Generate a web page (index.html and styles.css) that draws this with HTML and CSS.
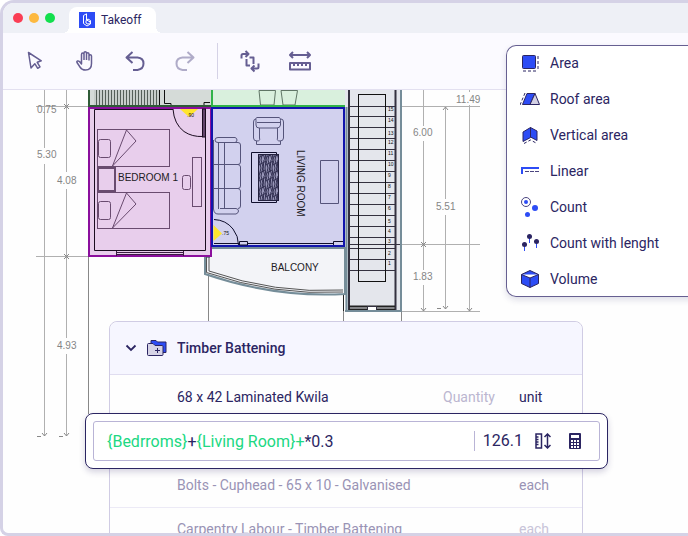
FILE: index.html
```html
<!DOCTYPE html>
<html lang="en">
<head>
    <meta charset="UTF-8">
    <meta name="viewport" content="width=device-width, initial-scale=1.0">
    <title>Takeoff</title>
    <link rel="stylesheet" href="styles.css">
</head>
<body>
    <div class="window">
        <header class="titlebar">
            <span class="dot dot-red"></span>
            <span class="dot dot-yellow"></span>
            <span class="dot dot-green"></span>
            <div class="tab">
                <svg class="logo" width="16" height="16" viewBox="0 0 16 16" fill="none" stroke="#fff">
                    <rect width="16" height="16" fill="#2d4cf5" stroke="none"/>
                    <path d="M4.500 3.500L7.500 1.800V8M4.500 3.500V11.500L8 14L11.500 12V8.500L9 7L7 8.500V11L9 12.200L11.500 10.500M7.500 8L11.500 10"/>
                </svg>
                <span>Takeoff</span>
            </div>
        </header>

        <nav class="toolbar">
            <button class="tool" aria-label="Select">
                <svg width="24" height="24" viewBox="0 0 24 24"><path d="M5.500 3.500L8 19L11.800 14.700L14.700 19.300L17 17.800L14.200 13.300L18.300 11.800Z"/></svg>
            </button>
            <button class="tool" aria-label="Pan">
                <svg width="24" height="24" viewBox="0 0 24 24"><path d="M8.500 13V5.500Q8.500 4 9.700 4T11 5.500V11M11 11V4Q11 2.700 12.200 2.700T13.500 4V11M13.500 5Q13.500 3.700 14.700 3.700T16 5V11.500M16 7Q16 5.800 17.200 5.800T18.500 7V14.500Q18.500 21 12.500 21Q9 21 7.300 18.500L4 13.500Q3.500 12.300 4.500 12T6.500 12.500L8.500 15V12"/></svg>
            </button>
            <button class="tool" aria-label="Undo">
                <svg class="thick" width="24" height="24" viewBox="0 0 24 24"><path d="M9.500 3L3.500 8.500L9.500 14M4 8.500H14.500Q20.500 9 20.500 14.500T14.500 21H10"/></svg>
            </button>
            <button class="tool tool-off" aria-label="Redo" disabled>
                <svg class="thick" width="24" height="24" viewBox="0 0 24 24"><path d="M14.500 3L20.500 8.500L14.500 14M20 8.500H9.500Q3.500 9 3.500 14.500T9.500 21H14"/></svg>
            </button>
            <span class="separator"></span>
            <button class="tool" aria-label="Rotate">
                <svg class="thick" width="24" height="24" viewBox="0 0 24 24"><path d="M3.500 9.500V6.500Q3.500 5 5 5H10M7.500 2L10.500 5L7.500 8M8.500 10V16.500H12M11.500 8.500H15.500V15M20.500 14.500V18Q20.500 19.500 19 19.500H14M16.500 16.500L13.500 19.500L16.500 22.500"/></svg>
            </button>
            <button class="tool" aria-label="Measure">
                <svg class="thick" width="24" height="24" viewBox="0 0 24 24"><path d="M2 6H22M5 3L2 6L5 9M19 3L22 6L19 9M2 14H22V20.500H2ZM6 14V17M10 14V17M14 14V17M18 14V17"/></svg>
            </button>
        </nav>

        <main class="canvas">
            <svg class="plan" width="500" height="360" viewBox="3 90 500 360" fill="none" stroke="#33303f">
                <defs>
                    <pattern id="hatch" width="3" height="16" patternUnits="userSpaceOnUse">
                        <path d="M.5 0V16" stroke="#555f59"/><path d="M2 0V16" stroke="#b9c0bc"/>
                    </pattern>
                    <pattern id="rug" width="7" height="16" patternUnits="userSpaceOnUse">
                        <path d="M0 0L2 8L0 16M2 0L4 7L2 16M5 0L4 9L6 16M7 0L6 8L7 16M0 5L7 1M1 13L6 10" stroke="#302e50"/>
                    </pattern>
                </defs>

                <!-- dimension lines -->
                <g stroke="#b0b0b0">
                    <path d="M44.500 90V436M66.500 90V436M36 106.500H89M36 256.500H89"/>
                    <path d="M402 106.500H480M402 244.500H480M402 311.500H480"/>
                    <path d="M423.500 90V311M445.500 107V309M469.500 90V311"/>
                    <path d="M88.500 257V414M208.500 257V322M343.500 295V322M401.500 311V322" stroke="#888"/>
                    <path d="M64 104L69 109M64 109L69 104M64 254L69 259M64 259L69 254M421 242L426 247M421 247L426 242M443 110L445.500 107L448 110M443 306L445.500 309L448 306M421 308L423.500 311L426 308M467 308L469.500 311L472 308M42 433L44.500 436L47 433M64 433L66.500 436L69 433M37 436.500H41M59 436.500H63M437 308.500H441" stroke="#888"/>
                </g>
                <g fill="#fefefe" stroke="none">
                    <rect x="36" y="148" width="24" height="16"/>
                    <rect x="55" y="172" width="24" height="17"/>
                    <rect x="55" y="338" width="24" height="16"/>
                    <rect x="411" y="126" width="24" height="15"/>
                    <rect x="434" y="199" width="24" height="16"/>
                    <rect x="411" y="270" width="24" height="15"/>
                    <rect x="455" y="92" width="26" height="13"/>
                </g>
                <g class="dims">
                    <text x="37" y="113">0.75</text>
                    <text x="37" y="158">5.30</text>
                    <text x="57" y="184">4.08</text>
                    <text x="57" y="349">4.93</text>
                    <text x="413" y="136">6.00</text>
                    <text x="436" y="210">5.51</text>
                    <text x="413" y="280">1.83</text>
                    <text x="456" y="103">11.49</text>
                </g>

                <!-- upper rooms -->
                <rect x="88" y="90" width="123" height="17" fill="#d5dbd8" stroke="none"/>
                <rect x="94" y="90" width="65" height="15" fill="url(#hatch)" stroke="none"/>
                <path d="M159.500 90V105M164.500 90V103.500H171V105M210 102.500H204V105" stroke="#111"/>
                <path d="M89 90V106H211" stroke="#2f5b37" stroke-width="2"/>
                <rect x="211" y="90" width="135" height="17" fill="#d9f0dd" stroke="none"/>
                <path d="M259 90.500H275.500L274 105H260.500ZM281 90.500H297.500L295 105H283Z" stroke="#5f7565"/>
                <path d="M212 90V106H346V90" stroke="#30b348" stroke-width="2"/>

                <!-- staircase -->
                <rect x="345" y="90" width="57" height="221" fill="#e4e6ec" stroke="none"/>
                <path d="M349 90V310M395.500 90V310" stroke-width="2"/>
                <path d="M350 106.500H395M350 116.500H395M350 127.500H395M350 138.500H395M350 149.500H395M350 160.500H395M350 171.500H395M350 182.500H395M350 193.500H395M350 204.500H395M350 215.500H395M350 226.500H395M350 237.500H395M350 244.500H402M350 248.500H395M350 259.500H395M350 270.500H395"/>
                <rect x="358.500" y="94.500" width="27" height="187" stroke="#111"/>
                <path d="M349 306.500H395M349 309.500H395" stroke="#222" stroke-width="2"/>
                <rect x="367.500" y="306.500" width="9" height="4" fill="#fff"/>
                <path d="M346.500 107V311M401 90V312M345 311H402" stroke="#758d99" stroke-width="2"/>
                <path d="M343.500 295V311" stroke="#222"/>
                <g class="steps">
                    <text x="388" y="111">15</text>
                    <text x="388" y="122">14</text>
                    <text x="388" y="135">13</text>
                    <text x="388" y="144">12</text>
                    <text x="388" y="155">11</text>
                    <text x="388" y="166">10</text>
                    <text x="388" y="177">9</text>
                    <text x="388" y="188">8</text>
                    <text x="388" y="199">7</text>
                    <text x="388" y="210">6</text>
                    <text x="388" y="223">5</text>
                    <text x="388" y="233">4</text>
                    <text x="388" y="243">3</text>
                    <text x="388" y="255">2</text>
                    <text x="388" y="265">1</text>
                </g>

                <!-- balcony -->
                <path d="M205 257V274Q275 298 345 294V248H209V257Z" fill="#f3f4f8" stroke="#758d99" stroke-width="2"/>
                <path d="M206.500 257V272.500Q275 296 343 292M209 256V271Q275 294 343 290" stroke="#555"/>
                <text class="room" x="271" y="271">BALCONY</text>

                <!-- bedroom -->
                <rect x="89" y="108" width="122" height="148" fill="#e8ceec" stroke="#8b0f9d" stroke-width="2"/>
                <path d="M173 109.500H94.500V250.500H205.500V109" stroke="#1b0d20"/>
                <path d="M116 252.500H184M116 254.500H184M116.500 251V256M183.500 251V256" stroke="#3b1d42"/>
                <rect x="202.500" y="109" width="3" height="28" fill="#62456a" stroke="#1b0d20"/>
                <path d="M173 109Q174 124 184 131.500Q192 137 203 136.500" stroke="#1b0d20"/>
                <path d="M180 109H198L189 117Z" fill="#ffe52e" stroke="none"/>
                <text class="door" x="187" y="117">.90</text>
                <g stroke="#694b6f">
                    <rect x="97.500" y="129.500" width="72" height="37"/>
                    <rect x="98.500" y="139.500" width="12" height="18" rx="2"/>
                    <path d="M112.500 166L126.500 130L136 141Z"/>
                    <rect x="97.500" y="192.500" width="72" height="36"/>
                    <rect x="98.500" y="201.500" width="12" height="18" rx="2"/>
                    <path d="M112.500 228L126.500 193L136 204Z"/>
                    <rect x="98" y="168" width="17" height="23" stroke-width="2"/>
                    <rect x="182.500" y="175.500" width="8" height="14" rx="2"/>
                    <rect x="192.500" y="157.500" width="9" height="49"/>
                </g>
                <text class="room" x="118" y="181">BEDROOM 1</text>

                <!-- living room -->
                <rect x="212" y="108" width="132" height="138" fill="#d2d1ee" stroke="#1115ad" stroke-width="2"/>
                <g stroke="#55547a">
                    <path d="M257 117.500H279Q281 118 280.500 120.500V125Q280 128 277 128H259Q256 128 256 125V120.500Q255 118 257 117.500ZM257 122.500H280M256 119Q253.500 119 253.500 122V138Q253.500 141 257 141T259.500 138V128M281 119Q283.500 119 283.500 122V138Q283.500 141 280 141T277.500 138V128M256.500 141V144.500H280.500V141"/>
                    <path d="M218 142.500Q215 142.500 215 140T218 137.500H235Q237 138 237 140T235 142.500H218M213.500 140V209Q214 214 218 214H236Q238.500 213 238.500 211T236 208.500H220M218.500 142.500V209M224.500 142.500V209M224.500 142.500H238Q240.500 142.500 240.500 145V162Q240.500 164.500 238 164.500H213M238 164.500Q240.500 165 240.500 167V186Q240.500 188.500 238 188.500H213M238 188.500Q240.500 189 240.500 191V206Q240.500 208.500 238 208.500"/>
                    <path d="M320.500 160.500H338.500V203.500H320.500Z"/>
                </g>
                <path d="M276.500 154V152.500H251.500V202.500H276.500V200" stroke="#0f0e2c"/>
                <rect x="258" y="154" width="21" height="47" fill="#9896b8" stroke="none"/>
                <rect x="258.500" y="154.500" width="20" height="46" fill="url(#rug)" stroke="#24223f"/>
                <text class="room" transform="translate(297 150) rotate(90)">LIVING ROOM</text>
                <path d="M214 219.500Q226 220 233 229Q238.500 236 238.500 245M214 243.500H239M247 243.500H333M239.500 241.500H247.500V245H239.500ZM333.500 245V241.500H343" stroke="#0f0e2c"/>
                <path d="M213.500 225L222 233.500L213.500 241Z" fill="#ffe52e" stroke="none"/>
                <text class="door" x="222" y="235">.75</text>
            </svg>

            <section class="estimate">
                <h2 class="estimate-head">
                    <button class="toggle" aria-label="Collapse group">
                        <svg width="12" height="12" viewBox="0 0 12 12" fill="none" stroke="#2b2562" stroke-width="1.800"><path d="M1.500 3.500L6 8L10.500 3.500"/></svg>
                    </button>
                    <svg width="20" height="18" viewBox="0 0 20 18" stroke="#2b2562">
                        <path d="M4 4V1.500H9L10.500 3H19V13.500H15" fill="#2d4cf5"/>
                        <path d="M.5 5.500Q.5 4.500 1.500 4.500H6L8 6.500H15Q16 6.500 16 7.500V15.500Q16 16.500 15 16.500H1.500Q.5 16.500 .5 15.500Z" fill="#d6d3e6"/>
                        <path d="M8 11.500H13M10.500 9V14"/>
                    </svg>
                    <span>Timber Battening</span>
                </h2>
                <table class="items">
                    <tbody>
                        <tr>
                            <td class="name">68 x 42 Laminated Kwila</td>
                            <td class="quantity"><input type="text" placeholder="Quantity" aria-label="Quantity"></td>
                            <td class="unit">unit</td>
                        </tr>
                        <tr>
                            <td colspan="3" class="formula-cell">
                                <div class="formula">
                                    <div class="formula-box">
                                        <div class="formula-text" contenteditable="true" role="textbox" aria-label="Formula" spellcheck="false"><span class="ref">{Bedrroms}</span>+<span class="ref">{Living Room}+</span>*0.3</div>
                                        <output class="result">126.1</output>
                                        <button class="icon-button" aria-label="Measurements">
                                            <svg width="16" height="16" viewBox="0 0 16 16" fill="none" stroke="#2b2562" stroke-width="1.500"><path d="M1 1H6.500V15H1ZM1 4H3.500M1 6.500H3.500M1 9H3.500M1 11.500H3.500M12.500 1V15M9.500 4L12.500 1L15.500 4M9.500 12L12.500 15L15.500 12"/></svg>
                                        </button>
                                        <button class="icon-button" aria-label="Calculator">
                                            <svg width="16" height="16" viewBox="0 0 16 16"><rect x="2" width="12" height="16" rx="1" fill="#2b2562"/><path d="M4 2H12V5H4ZM4 7H6V9H4ZM7 7H9V9H7ZM10 7H12V9H10ZM4 10H6V12H4ZM7 10H9V12H7ZM10 10H12V12H10ZM4 13H6V15H4ZM7 13H9V15H7ZM10 13H12V15H10Z" fill="#fff"/></svg>
                                        </button>
                                    </div>
                                </div>
                            </td>
                        </tr>
                        <tr class="muted">
                            <td class="name">Bolts - Cuphead - 65 x 10 - Galvanised</td>
                            <td class="quantity"></td>
                            <td class="unit">each</td>
                        </tr>
                        <tr class="muted faded">
                            <td class="name">Carpentry Labour - Timber Battening</td>
                            <td class="quantity"></td>
                            <td class="unit">each</td>
                        </tr>
                    </tbody>
                </table>
            </section>
        </main>

        <div class="menu">
            <button class="menu-item">
                <svg width="20" height="20" viewBox="0 0 20 20" fill="none" stroke="#2b2562"><rect x="2.500" y="2.500" width="13" height="13" rx="1" fill="#2d4cf5"/><path d="M18 3V18M3 18H18" stroke-dasharray="3 2"/></svg>
                Area
            </button>
            <button class="menu-item">
                <svg width="20" height="20" viewBox="0 0 20 20" stroke="#2b2562"><path d="M7 4.500H15L10 15.500H2.500Z" fill="#2d4cf5"/><path d="M15 4.500L19.500 15.500H10Z" fill="#d3d0e4"/><path d="M5 4L0 16" fill="none" stroke-dasharray="3 2"/></svg>
                Roof area
            </button>
            <button class="menu-item">
                <svg width="20" height="20" viewBox="0 0 20 20" fill="none" stroke="#2b2562"><path d="M3 7L10.500 2.500V12.500L3 16.500ZM10.500 2.500L17 6V15.500L10.500 12Z" fill="#2d4cf5"/><path d="M4 18.500L10.500 15L17 18.500" stroke-dasharray="3 2"/></svg>
                Vertical area
            </button>
            <button class="menu-item">
                <svg width="20" height="20" viewBox="0 0 20 20" fill="none"><path d="M2 13V7H19" stroke="#2d4cf5" stroke-width="2"/><path d="M5 10.500H19" stroke="#4b4580" stroke-dasharray="4 1"/></svg>
                Linear
            </button>
            <button class="menu-item">
                <svg width="20" height="20" viewBox="0 0 20 20" fill="#2d4cf5"><circle cx="6" cy="5" r="4.500" fill="none" stroke="#4b4580"/><circle cx="6" cy="5" r="2"/><circle cx="15" cy="11" r="3"/><circle cx="7.500" cy="17.500" r="2.500"/></svg>
                Count
            </button>
            <button class="menu-item">
                <svg width="20" height="20" viewBox="0 0 20 20" fill="#2b2562"><path d="M4.500 11V18M9.500 4V10M16.500 9V15" stroke="#2d4cf5"/><circle cx="4.500" cy="11.500" r="2.500"/><circle cx="9.500" cy="3.500" r="2.500"/><circle cx="16.500" cy="8.500" r="2.500"/></svg>
                Count with lenght
            </button>
            <button class="menu-item">
                <svg width="20" height="20" viewBox="0 0 20 20" fill="#2d4cf5" stroke="#2b2562"><path d="M10 1.500L18.500 5.500V14.500L10 18.500L1.500 14.500V5.500ZM1.500 5.500L10 9L18.500 5.500M10 9V18.500"/></svg>
                Volume
            </button>
        </div>
    </div>
</body>
</html>
```
FILE: styles.css
```css
* {
    box-sizing: border-box;
}
body {
    margin: 0;
    background-color: #fff;
    color: #2b2562;
    font-family: Roboto, sans-serif;
    font-size: 14px;
}
button {
    padding: 0;
    border: none;
    background: none;
    color: inherit;
    font: inherit;
    cursor: pointer;
}
svg {
    display: block;
    flex-shrink: 0;
}
.window {
    position: relative;
    display: flex;
    flex-direction: column;
    height: 100vh;
    border: 3px solid #d5d2e6;
    border-right: none;
    border-radius: 14px 0 0 8px;
    background-color: #fefefe;
    overflow: hidden;
}
.titlebar {
    display: flex;
    align-items: center;
    gap: 6px;
    height: 30px;
    padding-left: 10px;
    background-color: #eef0f6;
}
.dot {
    width: 10px;
    height: 10px;
    border-radius: 50%;
}
.dot-red {
    background-color: #fa3e54;
}
.dot-yellow {
    background-color: #fdb93f;
}
.dot-green {
    background-color: #13df4d;
}
.tab {
    position: relative;
    display: flex;
    align-items: center;
    align-self: flex-end;
    gap: 6px;
    height: 26px;
    margin-left: 8px;
    padding: 0 14px 0 10px;
    border-radius: 8px 8px 0 0;
    background-color: #fff;
    font-size: 12px;
}
.tab::before,
.tab::after {
    content: "";
    position: absolute;
    bottom: 0;
    width: 6px;
    height: 6px;
}
.tab::before {
    left: -6px;
    background: radial-gradient(circle at 0 0, transparent 6px, #fff 6px);
}
.tab::after {
    right: -6px;
    background: radial-gradient(circle at 100% 0, transparent 6px, #fff 6px);
}
.toolbar {
    display: flex;
    align-items: center;
    gap: 26px;
    height: 57px;
    padding-left: 20px;
    border-bottom: 1px solid #e3e0f0;
    background-color: #fbfaff;
}
.tool svg {
    fill: none;
    stroke: #655e92;
    stroke-width: 1.5;
    stroke-linejoin: round;
}
.tool .thick {
    stroke-width: 2;
}
.tool-off {
    opacity: 0.5;
}
.separator {
    width: 1px;
    height: 36px;
    margin: 0 -6px;
    background-color: #d5d2e6;
}
.canvas {
    position: relative;
    flex: 1;
    min-height: 0;
    padding: 231px 105px 0 106px;
}
.plan {
    position: absolute;
    top: 0;
    left: 0;
    font-family: "Liberation Sans", Arial, sans-serif;
}
.plan text {
    stroke: none;
}
.dims {
    font-size: 10px;
    fill: #858585;
}
.room {
    font-size: 10px;
    fill: #1d1a24;
}
.steps,
.door {
    font-size: 5px;
    fill: #111;
}
.estimate {
    position: relative;
    border: 1px solid #d0cce4;
    border-radius: 8px 8px 0 0;
    background-color: #fefefe;
}
.estimate-head {
    display: flex;
    align-items: center;
    gap: 10px;
    height: 53px;
    margin: 0;
    padding-left: 15px;
    border-bottom: 1px solid #e0ddf0;
    border-radius: 8px 8px 0 0;
    background-color: #f6f6ff;
    font-size: 14px;
    font-weight: 500;
}
.items {
    width: 100%;
    border-collapse: collapse;
    table-layout: fixed;
}
.items tr {
    height: 44px;
    border-bottom: 1px solid #eceaf6;
}
.items td {
    padding: 0;
}
.items .name {
    padding-left: 67px;
}
.items .quantity {
    width: 76px;
}
.items .unit {
    width: 63px;
}
.quantity input {
    width: 60px;
    padding: 0;
    border: none;
    background: none;
    color: inherit;
    font: inherit;
}
.quantity input::placeholder {
    color: #bbb6d0;
}
.muted {
    color: #9993b5;
}
.faded .unit {
    color: #c8c4d9;
}
.formula {
    position: absolute;
    top: 91px;
    left: -25px;
    right: -26px;
    padding: 7px;
    border: 1px solid #2b2562;
    border-radius: 8px;
    background-color: #fff;
    box-shadow: 0 3px 6px rgba(43, 37, 98, 0.2);
}
.formula-box {
    display: flex;
    align-items: center;
    height: 40px;
    padding: 0 16px 0 13px;
    border: 1px solid #b9b4d6;
    border-radius: 3px;
    font-size: 16px;
}
.formula-text {
    flex: 1;
    outline: none;
    white-space: nowrap;
}
.ref {
    color: #20d882;
}
.result {
    padding-left: 8px;
    border-left: 1px solid #b9b4d6;
    line-height: 20px;
}
.icon-button {
    margin-left: 12px;
}
.icon-button + .icon-button {
    margin-left: 16px;
}
.menu {
    position: absolute;
    top: 42px;
    right: -12px;
    width: 194px;
    border-radius: 10px;
    background-color: #fff;
    box-shadow: inset 0 0 0 1px #665f91, 0 3px 6px rgba(43, 37, 98, 0.15);
}
.menu-item {
    display: flex;
    align-items: center;
    gap: 10px;
    width: 100%;
    height: 36px;
    padding-left: 14px;
}
```
